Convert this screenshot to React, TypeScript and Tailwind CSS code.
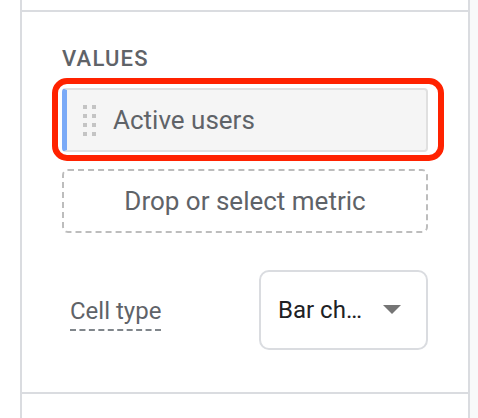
import React from "react";

const DragHandle = () => (
    <div className="grid grid-cols-2 gap-x-[5px] gap-y-[5px]">
        {Array.from({ length: 8 }).map((_, i) => (
            <div key={i} className="w-[4px] h-[4px] bg-[#c4c4c4]" />
        ))}
    </div>
);

const App = () => {
    return (
        <div className="flex w-full h-[418px] bg-white font-['Roboto',sans-serif] overflow-hidden">
            <div className="w-[20px] bg-white" />
            <div className="w-[450px] flex flex-col border-x-2 border-[#dadce0] bg-white">
                <div className="h-[10px]" />
                {/* Values section */}
                <div className="border-y-2 border-[#dadce0] pt-[34px] pb-[42px] px-[40px]">
                    <div className="text-[22px] leading-[26px] font-medium text-[#5f6368] tracking-[1.2px]">VALUES</div>
                    <div className="relative mt-[16px]">
                        <div className="flex items-center h-[64px] rounded-[4px] border-2 border-[#e0e0e0] border-l-[5px] border-l-[#7baaf7] bg-[#f5f5f5] pl-[16px]">
                            <DragHandle />
                            <span className="ml-[17px] text-[26px] text-[#5f6368]">Active users</span>
                        </div>
                        {/* highlight */}
                        <div className="absolute top-[-10px] left-[-10px] bottom-[-9px] right-[-16px] border-[6px] border-[#ff2200] rounded-[15px]" />
                    </div>
                    <div className="mt-[17px] h-[64px] flex items-center justify-center rounded-[6px] border-2 border-dashed border-[#bdbdbd] text-[26px] text-[#5f6368]">
                        Drop or select metric
                    </div>
                    <div className="mt-[37px] h-[80px] flex justify-between">
                        <span className="self-start ml-[8px] mt-[27px] pb-[4px] text-[24px] leading-[28px] text-[#5f6368] border-b-2 border-dashed border-[#80868b]">
                            Cell type
                        </span>
                        <div className="w-[169px] h-[80px] flex items-center justify-between rounded-[10px] border-2 border-[#dadce0] pl-[17px] pr-[24px]">
                            <span className="text-[24px] text-[#202124]">Bar ch…</span>
                            <svg width="20" height="10" viewBox="0 0 20 10">
                                <polygon points="1,0 19,0 10,9" fill="#757575" />
                            </svg>
                        </div>
                    </div>
                </div>
                <div className="flex-1" />
            </div>
            <div className="flex-1 bg-[#f8f9fa]" />
        </div>
    );
};

export default App;
